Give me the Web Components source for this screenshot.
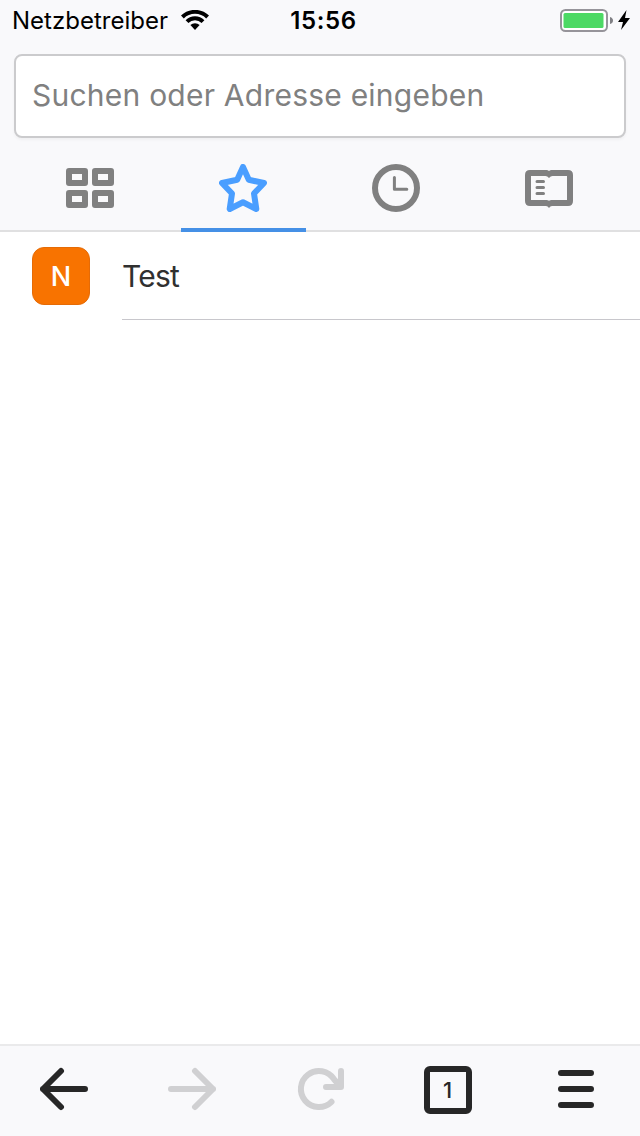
<!DOCTYPE html>
<html lang="de">
<head>
<meta charset="utf-8">
<title>Lesezeichen</title>
<style>
html, body { margin: 0; height: 100%; }
body { background: #fff; font-family: Inter, "Liberation Sans", sans-serif; }
</style>
</head>
<body>
<browser-app></browser-app>
<script>
const define = (name, html) => {
  const template = document.createElement('template');
  template.innerHTML = html;
  customElements.define(name, class extends HTMLElement {
    constructor() {
      super();
      this.attachShadow({ mode: 'open' }).append(template.content.cloneNode(true));
    }
  });
};

const GLYPHS = {
  grid: '<path stroke-width="6" d="M3 7h16v12H3zM29 7h16v12H29zM3 29h16v12H3zM29 29h16v12H29z"/>',
  star: '<path stroke-width="6" d="M24 3l5.800 12.800L45 19 35 29.500 37.300 45 24 38.300 10.700 45l2.300-15.500L3 19l15.200-3.200z"/>',
  clock: '<circle cx="24" cy="24" r="21" stroke-width="6"/><path stroke-width="3" d="M22.400 13.500v11.800h12.400"/>',
  book: '<path fill="currentColor" stroke="none" fill-rule="evenodd" d="M5 6h16.500q1.500 0 2.500 1 1-1 2.500-1H43q5 0 5 5v26q0 5-5 5H27q-1.700 0-3 2-1.300-2-3-2H5q-5 0-5-5V11q0-5 5-5zM6 12v24h15.500q1.500 0 2.500.8 1-.8 2.500-.8H42V12H27.500q-1.800 0-3.500 2-1.700-2-3.500-2z"/><path stroke-width="3" d="M12 17.500h6.500M12 23.500h6.500M12 29.500h6.500"/>',
  back: '<path stroke-width="6" d="M21 5L3 23l18 18M3 23h42"/>',
  forward: '<path stroke-width="6" d="M27 5l18 18-18 18M45 23H3"/>',
  reload: '<path stroke-width="6" d="M35.500 35.800A18 18 0 1 1 38 13.200L43 19M45 5v16H30"/>',
  tabs: '<rect x="3" y="3" width="42" height="42" rx="3" stroke-width="6"/>',
  menu: '<path stroke-width="6" d="M9 7h30M9 23h30M9 39h30"/>'
};
customElements.define('line-icon', class extends HTMLElement {
  constructor() {
    super();
    this.attachShadow({ mode: 'open' }).innerHTML = `
      <style>:host{display:block;width:48px;height:48px}svg{display:block}</style>
      <svg width="48" height="48" viewBox="0 0 48 48" fill="none" stroke="currentColor" stroke-linecap="round" stroke-linejoin="round">${GLYPHS[this.getAttribute('name')] || ''}</svg>`;
  }
});

define('status-bar', `
<style>
:host{display:grid;grid-template-columns:1fr auto 1fr;align-items:center;height:40px;padding:0 9px 0 12px;color:#000;font-size:24px;line-height:30px;box-sizing:border-box;white-space:nowrap}
svg{display:block}
.left{display:flex;align-items:center;gap:13px}
.carrier{letter-spacing:.02px;width:156px;padding-top:2px}
.time{font-weight:600;letter-spacing:.65px;padding:2px 0 0 4px}
.right{display:flex;justify-content:flex-end}
</style>
<div class="left"><span class="carrier">Netzbetreiber</span>
<svg width="28" height="20" viewBox="0 0 28 20"><g fill="none" stroke="#000" stroke-width="4"><path d="M1.400 7a18 18 0 0 1 25.200 0"/><path d="M6 11.600a11.500 11.500 0 0 1 16 0"/></g><path d="M14 20l-4.600-4.900a6.600 6.600 0 0 1 9.200 0z"/></svg></div>
<span class="time">15:56</span>
<div class="right"><svg width="72" height="24" viewBox="0 0 72 24"><rect x="2" y="2" width="46" height="21" rx="4.500" fill="#fff" stroke="#96949a" stroke-width="2"/><rect x="4.500" y="5" width="40" height="15" rx="1.500" fill="#4cd964"/><path d="M51 9q3 1 3 3.500T51 16z" fill="#808084"/><path d="M67.500 2L59 14h5l-2 8 9-12h-5z"/></svg></div>`);

define('search-field', `
<style>
:host{display:flex;align-items:center;box-sizing:border-box;height:84px;margin:14px 14px 0;padding:0 16px;background:#fff;border:2px solid #cbcbcd;border-radius:8px;box-shadow:0 2px 3px #0000000a;color:#808080;font-size:30px;white-space:nowrap}
span{letter-spacing:.23px;margin-top:-2px}
</style><span><slot></slot></span>`);

define('panel-tab', `
<style>
:host{display:flex;justify-content:center;box-sizing:border-box;height:76px;padding:10px 1px 0 0;color:#808080}
:host([selected]){color:#4a9eff;height:78px;margin-bottom:-2px;border-bottom:4px solid #4590e6}
</style><slot></slot>`);

define('panel-tabs', `
<style>
:host{display:grid;grid-template-columns:repeat(4,1fr);gap:28px;box-sizing:border-box;height:78px;margin-top:16px;padding:0 28px;border-bottom:2px solid #e0e0e1}
</style><slot></slot>`);

define('bookmark-row', `
<style>
:host{display:flex;height:88px;padding-left:32px;gap:32px;color:#303030}
.badge{display:flex;align-items:center;justify-content:center;box-sizing:border-box;width:58px;height:58px;margin-top:15px;border:1px solid #e56b06;border-radius:12px;background:#f87300;color:#fff;font-size:27px;font-weight:500}
.title{display:flex;align-items:center;flex:1;box-sizing:border-box;border-bottom:1px solid #c8c7cc;font-size:30px;letter-spacing:-.8px}
</style><div class="badge"><slot name="badge"></slot></div><div class="title"><slot></slot></div>`);

define('tab-count', `
<style>
:host{display:grid;width:48px;height:48px;place-items:center}
line-icon,span{grid-area:1/1}
span{font-size:22px;font-weight:500;line-height:24px;padding-right:1px}
</style><line-icon name="tabs"></line-icon><span><slot></slot></span>`);

define('bottom-bar', `
<style>
:host{display:grid;grid-template-columns:repeat(5,1fr);justify-items:center;box-sizing:border-box;height:92px;padding-top:20px;border-top:2px solid #eaeaeb;background:#f9f9fb;color:#272727}
::slotted([disabled]){color:#d0d0d2}
</style><slot></slot>`);

define('browser-app', `
<style>
:host{display:flex;flex-direction:column;height:1136px;width:640px;overflow:hidden}
header{background:#f9f9fb;height:232px}
main{flex:1}
</style>
<header>
<status-bar></status-bar>
<search-field>Suchen oder Adresse eingeben</search-field>
<panel-tabs>
<panel-tab><line-icon name="grid"></line-icon></panel-tab>
<panel-tab selected><line-icon name="star"></line-icon></panel-tab>
<panel-tab><line-icon name="clock"></line-icon></panel-tab>
<panel-tab><line-icon name="book"></line-icon></panel-tab>
</panel-tabs>
</header>
<main><bookmark-row><span slot="badge">N</span>Test</bookmark-row></main>
<bottom-bar>
<line-icon name="back"></line-icon>
<line-icon name="forward" disabled></line-icon>
<line-icon name="reload" disabled></line-icon>
<tab-count>1</tab-count>
<line-icon name="menu"></line-icon>
</bottom-bar>`);
</script>
</body>
</html>
